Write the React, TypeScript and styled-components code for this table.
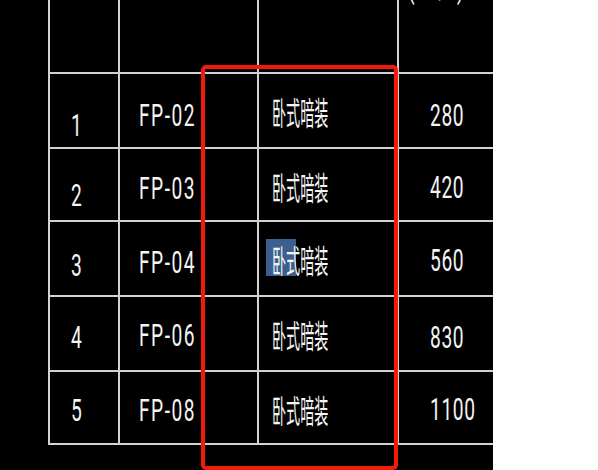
import React from "react";
import styled, { createGlobalStyle } from "styled-components";

const GlobalStyle = createGlobalStyle`
  html, body {
    margin: 0;
    padding: 0;
    background: #ffffff;
    overflow: hidden;
  }
  #root {
    width: 598px;
    height: 470px;
  }
`;

const Page = styled.div`
  display: flex;
  width: 598px;
  height: 470px;
  overflow: hidden;
`;

const Canvas = styled.div`
  position: relative;
  width: 493px;
  height: 470px;
  flex: none;
  box-sizing: border-box;
  padding-left: 48px;
  background: #000000;
  overflow: hidden;
`;

const Blank = styled.div`
  flex: 1;
  background: #ffffff;
`;

const Table = styled.div`
  display: grid;
  grid-template-columns: 70px 139px 140px 1fr;
  grid-template-rows: 74px 75px 73px 75px 75px 73px;
  border-left: 2px solid #d2d2d2;
`;

const Cell = styled.div<{ $top: number; $left: number; $last?: boolean }>`
  position: relative;
  box-sizing: border-box;
  display: flex;
  align-items: flex-start;
  padding-top: ${(p) => p.$top}px;
  padding-left: ${(p) => p.$left}px;
  border-bottom: 2px solid #d2d2d2;
  border-right: ${(p) => (p.$last ? "none" : "2px solid #d2d2d2")};
  overflow: visible;
`;

const CadText = styled.span<{ $shift?: number; $spacing?: number }>`
  position: relative;
  z-index: 1;
  display: block;
  margin-top: ${(p) => p.$shift ?? 0}px;
  font-family: Roboto, "Liberation Sans", sans-serif;
  font-weight: 400;
  font-size: 32px;
  line-height: 32px;
  letter-spacing: ${(p) => p.$spacing ?? 0}px;
  color: #f4f4f4;
  white-space: nowrap;
  transform: scaleX(0.6);
  transform-origin: left top;
`;

const CjkText = styled.span`
  position: relative;
  z-index: 1;
  display: block;
  font-family: "Noto Sans CJK SC", "Noto Sans CJK JP", sans-serif;
  font-weight: 400;
  font-size: 32px;
  line-height: 32px;
  color: #f6f6f6;
  white-space: nowrap;
  transform: scaleX(0.44);
  transform-origin: left top;
`;

const Selection = styled.span`
  position: absolute;
  left: 7px;
  top: 17px;
  width: 30px;
  height: 37px;
  background: #3b5f8e;
  z-index: 0;
`;

const RedFrame = styled.div`
  position: absolute;
  left: 201px;
  top: 65px;
  width: 197px;
  height: 405px;
  box-sizing: border-box;
  border: 4px solid #f31a0c;
  border-radius: 5px;
  pointer-events: none;
`;

type Row = {
  no: string;
  code: string;
  flow: string;
  noTop: number;
  codeTop: number;
  flowTop: number;
  selected?: boolean;
};

const rows: Row[] = [
  { no: "1", code: "FP-02", flow: "280", noTop: 39, codeTop: 29, flowTop: 29 },
  { no: "2", code: "FP-03", flow: "420", noTop: 34, codeTop: 27, flowTop: 26 },
  { no: "3", code: "FP-04", flow: "560", noTop: 31, codeTop: 28, flowTop: 26, selected: true },
  { no: "4", code: "FP-06", flow: "830", noTop: 28, codeTop: 26, flowTop: 28 },
  { no: "5", code: "FP-08", flow: "1100", noTop: 26, codeTop: 26, flowTop: 25 },
];

const GLYPH = 4; // distance from line-box top to the top of the digits
const CJK_GLYPH = 3;

export default function App() {
  return (
    <>
      <GlobalStyle />
      <Page>
        <Canvas>
          <Table>
            <Cell $top={0} $left={0} />
            <Cell $top={0} $left={0} />
            <Cell $top={0} $left={0} />
            <Cell $top={0} $left={9} $last>
              <CadText $shift={-29}>(m³/h)</CadText>
            </Cell>
            {rows.map((r) => (
              <React.Fragment key={r.no}>
                <Cell $top={r.noTop - GLYPH} $left={21}>
                  <CadText>{r.no}</CadText>
                </Cell>
                <Cell $top={r.codeTop - GLYPH} $left={19}>
                  <CadText $spacing={2.5}>{r.code}</CadText>
                </Cell>
                <Cell $top={24 - CJK_GLYPH} $left={13}>
                  {r.selected && <Selection />}
                  <CjkText>卧式暗装</CjkText>
                </Cell>
                <Cell $top={r.flowTop - GLYPH} $left={31} $last>
                  <CadText $spacing={1}>{r.flow}</CadText>
                </Cell>
              </React.Fragment>
            ))}
          </Table>
          <RedFrame />
        </Canvas>
        <Blank />
      </Page>
    </>
  );
}
